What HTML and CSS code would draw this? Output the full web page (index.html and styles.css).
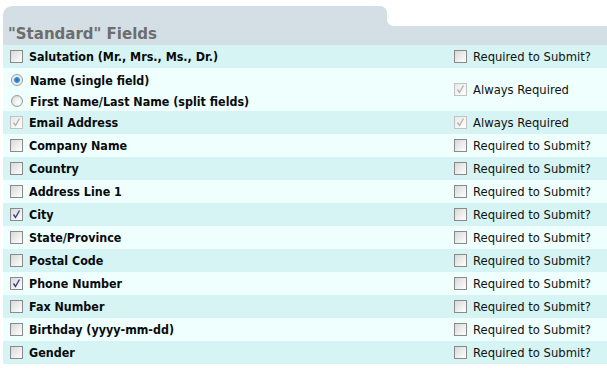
FILE: index.html
```html
<!DOCTYPE html>
<html lang="en">
<head>
    <meta charset="UTF-8">
    <title>Standard Fields</title>
    <link rel="stylesheet" href="styles.css">
</head>
<body>

<div class="panel">
    <div class="tabrow">
        <div class="tab"></div>
    </div>
    <div class="titlebar">"Standard" Fields</div>

    <div class="row odd">
        <label class="field"><span class="box"></span>Salutation (Mr., Mrs., Ms., Dr.)</label>
        <label class="req"><span class="box"></span>Required to Submit?</label>
    </div>

    <div class="row even tall">
        <div class="radios">
            <label class="field"><span class="radio on"></span>Name (single field)</label>
            <label class="field"><span class="radio"></span>First Name/Last Name (split fields)</label>
        </div>
        <label class="req"><span class="box dis"><svg viewBox="0 0 13 13"><path d="M3.5 6.5 L5.5 9.5 L9.5 2.5" /></svg></span>Always Required</label>
    </div>

    <div class="row odd">
        <label class="field"><span class="box dis"><svg viewBox="0 0 13 13"><path d="M3.5 6.5 L5.5 9.5 L9.5 2.5" /></svg></span>Email Address</label>
        <label class="req"><span class="box dis"><svg viewBox="0 0 13 13"><path d="M3.5 6.5 L5.5 9.5 L9.5 2.5" /></svg></span>Always Required</label>
    </div>

    <div class="row even">
        <label class="field"><span class="box"></span>Company Name</label>
        <label class="req"><span class="box"></span>Required to Submit?</label>
    </div>
    <div class="row odd">
        <label class="field"><span class="box"></span>Country</label>
        <label class="req"><span class="box"></span>Required to Submit?</label>
    </div>
    <div class="row even">
        <label class="field"><span class="box"></span>Address Line 1</label>
        <label class="req"><span class="box"></span>Required to Submit?</label>
    </div>
    <div class="row odd">
        <label class="field"><span class="box on"><svg viewBox="0 0 13 13"><path d="M3.5 6.5 L5.5 9.5 L9.5 2.5" /></svg></span>City</label>
        <label class="req"><span class="box"></span>Required to Submit?</label>
    </div>
    <div class="row even">
        <label class="field"><span class="box"></span>State/Province</label>
        <label class="req"><span class="box"></span>Required to Submit?</label>
    </div>
    <div class="row odd">
        <label class="field"><span class="box"></span>Postal Code</label>
        <label class="req"><span class="box"></span>Required to Submit?</label>
    </div>
    <div class="row even">
        <label class="field"><span class="box on"><svg viewBox="0 0 13 13"><path d="M3.5 6.5 L5.5 9.5 L9.5 2.5" /></svg></span>Phone Number</label>
        <label class="req"><span class="box"></span>Required to Submit?</label>
    </div>
    <div class="row odd">
        <label class="field"><span class="box"></span>Fax Number</label>
        <label class="req"><span class="box"></span>Required to Submit?</label>
    </div>
    <div class="row even">
        <label class="field"><span class="box"></span>Birthday (yyyy-mm-dd)</label>
        <label class="req"><span class="box"></span>Required to Submit?</label>
    </div>
    <div class="row odd">
        <label class="field"><span class="box"></span>Gender</label>
        <label class="req"><span class="box"></span>Required to Submit?</label>
    </div>
</div>

</body>
</html>
```

FILE: styles.css
```css
body {
    margin: 0;
    background-color: #ffffff;
    color: #000000;
    font-family: "DejaVu Sans", Verdana, sans-serif;
    font-size: 11.6px;
}
.panel {
    margin: 6px 0 0 3px;
    width: 620px;
}
.tabrow {
    display: flex;
    height: 20px;
}
.tab {
    position: relative;
    width: 384px;
    background-color: #d3dfe4;
    border-radius: 9px 7px 0 0;
}
.tab::after {
    content: "";
    position: absolute;
    right: -6px;
    bottom: 0;
    width: 6px;
    height: 6px;
    background: radial-gradient(circle at 100% 0, transparent 5.5px, #d3dfe4 6px);
}
.titlebar {
    background-color: #d3dfe4;
    color: #6d6d6d;
    font-family: "DejaVu Sans", Verdana, sans-serif;
    font-weight: bold;
    font-size: 15px;
    height: 19px;
    padding-left: 5px;
    line-height: 16px;
}
.row {
    display: grid;
    grid-template-columns: 444px 1fr;
    align-items: center;
    height: 23px;
}
.row.tall {
    height: 43px;
}
.odd {
    background-color: #d5f4f3;
}
.even {
    background-color: #eefffe;
}
.field {
    display: flex;
    align-items: center;
    padding-left: 7px;
    font-family: "DejaVu Sans Condensed", "DejaVu Sans", sans-serif;
    font-weight: bold;
    font-size: 12.4px;
    color: #0a0a0a;
}
.req {
    display: flex;
    align-items: center;
    padding-left: 7px;
    color: #111111;
}
.radios {
    display: flex;
    flex-direction: column;
    gap: 6px;
    padding-top: 2px;
}
.box {
    box-sizing: border-box;
    width: 13px;
    height: 13px;
    margin-right: 6px;
    border: 1px solid #8a8a8a;
    background: linear-gradient(135deg, #d8d8d8 0%, #f0f0f0 60%, #ffffff 100%);
    flex-shrink: 0;
    position: relative;
}
.box svg {
    position: absolute;
    left: -1px;
    top: -1px;
    width: 13px;
    height: 13px;
}
.box path {
    fill: none;
    stroke: #3b3b8c;
    stroke-width: 1.4;
}
.box.dis {
    border-color: #c2c2c2;
    background: linear-gradient(135deg, #e8e8e8 0%, #f6f6f6 60%, #ffffff 100%);
}
.box.dis path {
    stroke: #b4b4b4;
}
.radio {
    box-sizing: border-box;
    width: 12px;
    height: 12px;
    margin: 0 7px 0 1px;
    border-radius: 50%;
    border: 1px solid #9a9a9a;
    background: radial-gradient(circle at 65% 65%, #ffffff 0%, #e6e6e6 60%, #cfcfcf 100%);
    flex-shrink: 0;
}
.radio.on {
    background: radial-gradient(circle at 50% 50%, #1d6fb8 0px, #3b8fd6 2.5px, #d8e7f3 3.2px, #f4f4f4 5px);
}
```
